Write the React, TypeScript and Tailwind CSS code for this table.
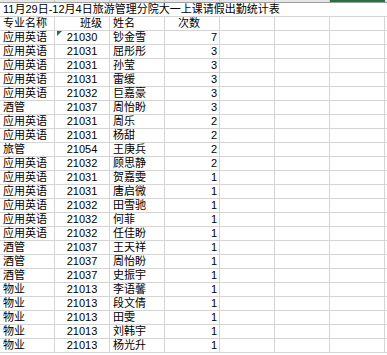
const rows: [string, string, string, number][] = [
  ["应用英语", "21030", "钞金雪", 7],
  ["应用英语", "21031", "屈彤彤", 3],
  ["应用英语", "21031", "孙莹", 3],
  ["应用英语", "21031", "雷缓", 3],
  ["应用英语", "21032", "巨嘉豪", 3],
  ["酒管", "21037", "周怡盼", 3],
  ["应用英语", "21031", "周乐", 2],
  ["应用英语", "21031", "杨甜", 2],
  ["旅管", "21054", "王庚兵", 2],
  ["应用英语", "21032", "顾思静", 2],
  ["应用英语", "21031", "贺嘉雯", 1],
  ["应用英语", "21031", "唐启微", 1],
  ["应用英语", "21032", "田雪驰", 1],
  ["应用英语", "21032", "何菲", 1],
  ["应用英语", "21032", "任佳盼", 1],
  ["酒管", "21037", "王天祥", 1],
  ["酒管", "21037", "周怡盼", 1],
  ["酒管", "21037", "史振宇", 1],
  ["物业", "21013", "李语馨", 1],
  ["物业", "21013", "段文倩", 1],
  ["物业", "21013", "田雯", 1],
  ["物业", "21013", "刘韩宇", 1],
  ["物业", "21013", "杨光升", 1],
];

const cell = "w-[55px] shrink-0 border-r border-[#d4d4d4] h-full overflow-visible whitespace-nowrap";

function EmptyCells() {
  return (
    <>
      <div className={cell} />
      <div className={cell} />
      <div className={cell} />
    </>
  );
}

export default function App() {
  return (
    <div
      className="w-[387px] h-[355px] overflow-hidden bg-white text-[11px] leading-[13px] text-black"
      style={{ fontFamily: '"Liberation Sans", "Noto Sans CJK SC", sans-serif' }}
    >
      {/* column header remnant */}
      <div className="flex h-[3px] bg-[#e6e6e6] border-b border-[#9e9e9e]">
        <div className="w-[55px] shrink-0 border-r border-[#c8c8c8]" />
        <div className="w-[55px] shrink-0 border-r border-[#c8c8c8]" />
        <div className="w-[55px] shrink-0 border-r border-[#c8c8c8]" />
        <div className="w-[55px] shrink-0 border-r border-[#c8c8c8]" />
        <div className="w-[55px] shrink-0 border-r border-[#c8c8c8]" />
        <div className="w-[55px] shrink-0 border-r border-[#c8c8c8]" />
        <div className="w-[55px] shrink-0 bg-[#217346]" />
      </div>

      {/* title */}
      <div className="h-[14px] border-b border-[#d4d4d4] pl-[3px] whitespace-nowrap">
        11月29日-12月4日旅游管理分院大一上课请假出勤统计表
      </div>

      {/* header */}
      <div className="flex h-[14px] border-b border-[#d4d4d4]">
        <div className={`${cell} pl-[3px]`}>专业名称</div>
        <div className={`${cell} pl-[25px]`}>班级</div>
        <div className={`${cell} pl-[3px]`}>姓名</div>
        <div className={`${cell} pl-[13px]`}>次数</div>
        <EmptyCells />
      </div>

      {rows.map((r, i) => (
        <div key={i} className="flex h-[14px] border-b border-[#d4d4d4]">
          <div className={`${cell} pl-[3px]`}>{r[0]}</div>
          <div className={`${cell} relative text-center`}>
            {i === 0 && (
              <span className="absolute left-[2px] top-0 w-0 h-0 border-t-[5px] border-r-[5px] border-t-[#1e7145] border-r-transparent" />
            )}
            {r[1]}
          </div>
          <div className={`${cell} pl-[3px]`}>{r[2]}</div>
          <div className={`${cell} text-right pr-[2px]`}>{r[3]}</div>
          <EmptyCells />
        </div>
      ))}
    </div>
  );
}
